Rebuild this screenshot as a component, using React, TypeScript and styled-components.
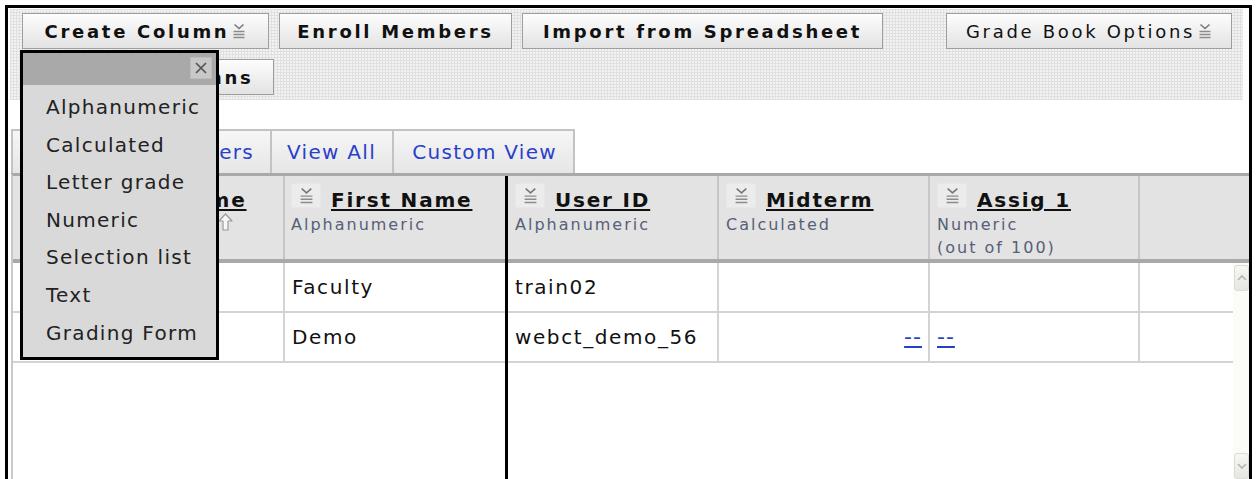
import * as React from 'react'
import styled, { createGlobalStyle } from 'styled-components'

const GlobalStyle = createGlobalStyle`
    html, body {
        margin: 0;
        padding: 0;
        background: #fff;
    }
    body {
        font-family: 'DejaVu Sans', Verdana, sans-serif;
        color: #111;
        overflow: hidden;
    }
    * {
        box-sizing: border-box;
    }
`

const Frame = styled.div`
    position: relative;
    margin: 5px 0 0 5px;
    width: 1247px;
    height: 475px;
    border: 3px solid #000;
    border-bottom: none;
    display: flex;
    flex-direction: column;
`

/* ---------- toolbar ---------- */

const Toolbar = styled.div`
    flex: none;
    height: 91px;
    margin: 1px 6px 0 2px;
    padding: 4px 11px 0 12px;
    background-color: #f3f3f3;
    background-image: linear-gradient(#e0e0e0 1px, transparent 1px),
        linear-gradient(90deg, #e0e0e0 1px, transparent 1px);
    background-size: 3px 3px;
    display: flex;
    flex-direction: column;
    gap: 10px;
`

const ToolRow = styled.div`
    display: flex;
    gap: 10px;
    height: 36px;
`

const ToolButton = styled.button<{ $w: number; $plain?: boolean; $right?: boolean }>`
    width: ${p => p.$w}px;
    height: 36px;
    margin-left: ${p => (p.$right ? 'auto' : '0')};
    padding: 0;
    display: flex;
    align-items: center;
    justify-content: center;
    gap: 3px;
    font-family: 'DejaVu Sans', Verdana, sans-serif;
    font-size: 18px;
    font-weight: ${p => (p.$plain ? 'normal' : 'bold')};
    letter-spacing: 2.7px;
    color: #111;
    white-space: nowrap;
    border: 1px solid #9e9e9e;
    border-radius: 0;
    background: linear-gradient(#fdfdfd, #e3e3e3);
    cursor: pointer;
`

const MenuAnchor = styled.div`
    position: relative;
    display: flex;
`

const Popup = styled.div`
    position: absolute;
    top: calc(100% + 1px);
    left: -2px;
    z-index: 10;
    width: 199px;
    border: 3px solid #000;
    background: #d9d9d9;
`

const PopupBar = styled.div`
    height: 32px;
    background: #a9a9a9;
    display: flex;
    justify-content: flex-end;
    align-items: center;
    padding: 0 4px 2px 0;
`

const CloseBox = styled.span`
    width: 22px;
    height: 22px;
    display: flex;
    align-items: center;
    justify-content: center;
    background: #c8c8c8;
    border: 1px solid #bcbcbc;
`

const PopupList = styled.ul`
    list-style: none;
    margin: 0;
    padding: 4px 0 5px;
`

const PopupItem = styled.li`
    height: 37.6px;
    line-height: 37.6px;
    padding-left: 23px;
    font-size: 20px;
    letter-spacing: 1.3px;
    color: #222;
    white-space: nowrap;
`

/* ---------- view tabs ---------- */

const TabStrip = styled.div`
    flex: none;
    display: flex;
    height: 44px;
    margin: 29px 0 0 3px;
`

const Tab = styled.a<{ $w: number }>`
    width: ${p => p.$w}px;
    display: flex;
    align-items: center;
    justify-content: flex-end;
    padding-right: 16px;
    font-size: 20px;
    letter-spacing: 1.3px;
    color: #2a3fc9;
    text-decoration: none;
    white-space: nowrap;
    background: linear-gradient(#f6f6f6, #e6e6e6);
    border-top: 2px solid #c3c3c3;
    border-left: 2px solid #c3c3c3;
    &:last-child {
        border-right: 2px solid #c3c3c3;
    }
`

/* ---------- grade sheet ---------- */

const Sheet = styled.div`
    flex: 1;
    min-height: 0;
    display: flex;
    margin-left: 3px;
    border-top: 3px solid #a9a9a9;
    border-left: 2px solid #c9c9c9;
    overflow: hidden;
`

const Pane = styled.div<{ $w?: number }>`
    display: flex;
    flex-direction: column;
    ${p => (p.$w ? `width: ${p.$w}px; flex: none;` : 'flex: 1; min-width: 0;')}
`

const FreezeLine = styled.div`
    width: 3px;
    flex: none;
    background: #000;
`

const HeadRow = styled.div<{ $cols: string }>`
    flex: none;
    display: grid;
    grid-template-columns: ${p => p.$cols};
    height: 87px;
    background: #e3e3e3;
    border-bottom: 4px solid #a9a9a9;
`

const HeadCell = styled.div<{ $pad?: number }>`
    padding: 7px 6px 0 ${p => p.$pad ?? 7}px;
    border-right: 2px solid #c6c6c6;
    &:last-child {
        border-right: none;
    }
`

const TitleLine = styled.div`
    display: flex;
    align-items: flex-start;
    gap: 10px;
`

const IconBox = styled.span`
    flex: none;
    width: 30px;
    height: 25px;
    display: flex;
    align-items: center;
    justify-content: center;
    background: #ececec;
    border: 1px solid #e7e7e7;
    border-radius: 2px;
`

const TitleBlock = styled.div`
    display: flex;
    flex-direction: column;
    align-items: flex-end;
    margin-top: 5px;
`

const Title = styled.a`
    font-size: 20px;
    font-weight: bold;
    letter-spacing: 1.8px;
    line-height: 24px;
    color: #111;
    white-space: nowrap;
    text-decoration: underline;
    text-decoration-thickness: 2px;
    text-underline-offset: 2px;
`

const SortMark = styled.span`
    display: flex;
    margin: 1px 14px 0 0;
`

const Kind = styled.div`
    margin-top: 3px;
    font-size: 16px;
    letter-spacing: 2px;
    line-height: 20px;
    color: #566078;
    white-space: nowrap;
`

const BodyRow = styled.div<{ $cols: string }>`
    flex: none;
    display: grid;
    grid-template-columns: ${p => p.$cols};
    height: 50px;
    border-bottom: 2px solid #d3d3d3;
`

const Cell = styled.div<{ $end?: boolean }>`
    padding: 0 6px 0 7px;
    line-height: 48px;
    font-size: 20px;
    letter-spacing: 1.6px;
    color: #111;
    white-space: nowrap;
    overflow: hidden;
    text-align: ${p => (p.$end ? 'right' : 'left')};
    border-right: 2px solid #d3d3d3;
    &:last-child {
        border-right: none;
    }
`

const GradeLink = styled.a`
    color: #2141c6;
    font-size: 22px;
    letter-spacing: 1px;
    text-decoration: underline;
`

const ScrollBody = styled.div`
    flex: 1;
    min-height: 0;
    display: flex;
`

const Rows = styled.div`
    flex: 1;
    min-width: 0;
    display: flex;
    flex-direction: column;
`

const Scrollbar = styled.div`
    width: 16px;
    flex: none;
    display: flex;
    flex-direction: column;
    justify-content: space-between;
    padding: 2px 0 1px 1px;
    background: #fbfbf7;
`

const ScrollButton = styled.span`
    height: 26px;
    display: flex;
    align-items: center;
    justify-content: center;
    background: linear-gradient(#f7f7f3, #e7e7e1);
    border: 1px solid #dcdcd4;
    border-radius: 3px;
`

/* ---------- glyphs ---------- */

const DropGlyph = ({ w = 14 }: { w?: number }) => (
    <svg width={w} height={(w * 16) / 14} viewBox="0 0 14 16" aria-hidden>
        <path d="M2.5 1.5 L7 5.5 L11.5 1.5" fill="none" stroke="#7a7a7a" strokeWidth="1.6" />
        <path d="M1.5 8.5 H12.5 M1.5 11.5 H12.5 M1.5 14.5 H12.5" stroke="#8c8c8c" strokeWidth="1.3" />
    </svg>
)

const CloseGlyph = () => (
    <svg width="14" height="14" viewBox="0 0 14 14" aria-hidden>
        <path d="M2 2 L12 12 M12 2 L2 12" stroke="#555" strokeWidth="1.7" />
    </svg>
)

const SortUpGlyph = () => (
    <svg width="15" height="18" viewBox="0 0 15 18" aria-hidden>
        <path
            d="M7.5 1 L14 8 L10 8 L10 17 L5 17 L5 8 L1 8 Z"
            fill="#f7f7f7"
            stroke="#9a9a9a"
            strokeWidth="1.2"
            strokeLinejoin="round"
        />
    </svg>
)

const Chevron = ({ up }: { up?: boolean }) => (
    <svg width="12" height="10" viewBox="0 0 12 10" aria-hidden>
        <path
            d={up ? 'M2 7 L6 3 L10 7' : 'M2 3 L6 7 L10 3'}
            fill="none"
            stroke="#b4b4b4"
            strokeWidth="1.6"
        />
    </svg>
)

/* ---------- data ---------- */

type Column = { title: string; kind: string[]; sorted?: boolean; pad?: number }

const columnTypes = [
    'Alphanumeric',
    'Calculated',
    'Letter grade',
    'Numeric',
    'Selection list',
    'Text',
    'Grading Form',
]

const frozenCols: Column[] = [
    { title: 'Last Name', kind: [], sorted: true, pad: 58 },
    { title: 'First Name', kind: ['Alphanumeric'], pad: 6 },
]

const scrollCols: (Column | null)[] = [
    { title: 'User ID', kind: ['Alphanumeric'] },
    { title: 'Midterm', kind: ['Calculated'] },
    { title: 'Assig 1', kind: ['Numeric', '(out of 100)'] },
    null,
]

type Grade = string | { link: string; end?: boolean }

// last names sit under the open column menu, so the cells stay empty here
const members: { id: number; first: string; grades: Grade[] }[] = [
    { id: 1, first: 'Faculty', grades: ['train02', '', '', ''] },
    {
        id: 2,
        first: 'Demo',
        grades: ['webct_demo_56', { link: '--', end: true }, { link: '--' }, ''],
    },
]

const FROZEN_GRID = '272px 220px'
const SCROLL_GRID = '211px 211px 210px 1fr'

const HeaderCell: React.FC<{ col: Column | null }> = ({ col }) => {
    if (!col) return <HeadCell />
    return (
        <HeadCell $pad={col.pad}>
            <TitleLine>
                <IconBox>
                    <DropGlyph w={15} />
                </IconBox>
                <TitleBlock>
                    <Title>{col.title}</Title>
                    {col.sorted && (
                        <SortMark>
                            <SortUpGlyph />
                        </SortMark>
                    )}
                </TitleBlock>
            </TitleLine>
            {col.kind.map(k => (
                <Kind key={k}>{k}</Kind>
            ))}
        </HeadCell>
    )
}

export default function App() {
    return (
        <>
            <GlobalStyle />
            <Frame>
                <Toolbar>
                    <ToolRow>
                        <MenuAnchor>
                            <ToolButton $w={247}>
                                Create Column
                                <DropGlyph />
                            </ToolButton>
                            <Popup>
                                <PopupBar>
                                    <CloseBox>
                                        <CloseGlyph />
                                    </CloseBox>
                                </PopupBar>
                                <PopupList>
                                    {columnTypes.map(t => (
                                        <PopupItem key={t}>{t}</PopupItem>
                                    ))}
                                </PopupList>
                            </Popup>
                        </MenuAnchor>
                        <ToolButton $w={233}>Enroll Members</ToolButton>
                        <ToolButton $w={361}>Import from Spreadsheet</ToolButton>
                        <ToolButton $w={286} $plain $right>
                            Grade Book Options
                            <DropGlyph />
                        </ToolButton>
                    </ToolRow>
                    <ToolRow>
                        <ToolButton $w={252}>Manage Columns</ToolButton>
                    </ToolRow>
                </Toolbar>

                <TabStrip>
                    <Tab $w={259}>Selected Members</Tab>
                    <Tab $w={122}>View All</Tab>
                    <Tab $w={183}>Custom View</Tab>
                </TabStrip>

                <Sheet>
                    <Pane $w={492}>
                        <HeadRow $cols={FROZEN_GRID}>
                            {frozenCols.map(c => (
                                <HeaderCell key={c.title} col={c} />
                            ))}
                        </HeadRow>
                        {members.map(m => (
                            <BodyRow key={m.id} $cols={FROZEN_GRID}>
                                <Cell />
                                <Cell>{m.first}</Cell>
                            </BodyRow>
                        ))}
                    </Pane>

                    <FreezeLine />

                    <Pane>
                        <HeadRow $cols={SCROLL_GRID}>
                            {scrollCols.map((c, i) => (
                                <HeaderCell key={i} col={c} />
                            ))}
                        </HeadRow>
                        <ScrollBody>
                            <Rows>
                                {members.map(m => (
                                    <BodyRow key={m.id} $cols={SCROLL_GRID}>
                                        {m.grades.map((g, i) =>
                                            typeof g === 'string' ? (
                                                <Cell key={i}>{g}</Cell>
                                            ) : (
                                                <Cell key={i} $end={g.end}>
                                                    <GradeLink>{g.link}</GradeLink>
                                                </Cell>
                                            )
                                        )}
                                    </BodyRow>
                                ))}
                            </Rows>
                            <Scrollbar>
                                <ScrollButton>
                                    <Chevron up />
                                </ScrollButton>
                                <ScrollButton>
                                    <Chevron />
                                </ScrollButton>
                            </Scrollbar>
                        </ScrollBody>
                    </Pane>
                </Sheet>
            </Frame>
        </>
    )
}
